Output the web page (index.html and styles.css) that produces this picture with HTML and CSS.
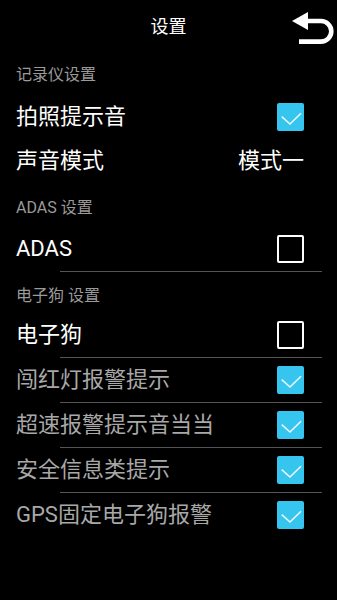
FILE: index.html
```html
<!DOCTYPE html>
<html lang="zh-CN">
<head>
<meta charset="utf-8">
<title>设置</title>
<link rel="stylesheet" href="styles.css">
</head>
<body>
<div class="screen">
  <header class="topbar">
    <span></span>
    <h1 class="title">设置</h1>
    <button class="back" aria-label="返回">
      <svg width="44" height="50" viewBox="0 0 44 50">
        <polygon points="1,20 17,11 17,29" fill="#fff"/>
        <path d="M15 20 H30 A10.3 10.3 0 0 1 30 40.6 H8" fill="none" stroke="#fff" stroke-width="4.6"/>
      </svg>
    </button>
  </header>

  <div class="cat cat-first">记录仪设置</div>
  <div class="row"><span class="label">拍照提示音</span><span class="box on"></span></div>
  <div class="row"><span class="label">声音模式</span><span class="value">模式一</span></div>

  <div class="cat">ADAS 设置</div>
  <div class="row"><span class="label">ADAS</span><span class="box"></span></div>
  <div class="divider"></div>

  <div class="cat cat-tight">电子狗 设置</div>
  <div class="row"><span class="label">电子狗</span><span class="box"></span></div>
  <div class="divider"></div>
  <div class="row off"><span class="label">闯红灯报警提示</span><span class="box on"></span></div>
  <div class="divider"></div>
  <div class="row off"><span class="label">超速报警提示音当当</span><span class="box on"></span></div>
  <div class="divider"></div>
  <div class="row off"><span class="label">安全信息类提示</span><span class="box on"></span></div>
  <div class="divider"></div>
  <div class="row off"><span class="label">GPS固定电子狗报警</span><span class="box on"></span></div>
</div>
</body>
</html>
```

FILE: styles.css
```css
html, body {
  margin: 0;
  padding: 0;
  background: #000;
}
body {
  font-family: Roboto, "Noto Sans CJK SC", sans-serif;
  color: #fff;
  width: 337px;
  height: 600px;
  overflow: hidden;
}
.screen {
  display: flex;
  flex-direction: column;
}
.topbar {
  height: 52px;
  display: grid;
  grid-template-columns: 1fr auto 1fr;
  align-items: center;
}
.title {
  margin: 0;
  padding-top: 2px;
  font-size: 18px;
  font-weight: normal;
  line-height: 24px;
  color: #fff;
}
.back {
  justify-self: end;
  margin: 0;
  padding: 0;
  margin-right: 2px;
  border: 0;
  background: none;
  width: 44px;
  height: 50px;
  display: block;
}
.back svg {
  display: block;
}
.cat {
  font-size: 16px;
  line-height: 20px;
  color: #9a9a9a;
  padding: 15px 16px 9px;
}
.cat-first {
  padding-top: 13px;
  padding-bottom: 10px;
}
.cat-tight {
  padding-top: 14px;
  padding-bottom: 7px;
}
.row {
  height: 44px;
  display: flex;
  align-items: center;
  justify-content: space-between;
  padding: 0 33px 0 16px;
  font-size: 22px;
  color: #fff;
}
.row.off {
  color: #a8a8a8;
}
.label, .value {
  line-height: 28px;
}
.box {
  width: 27px;
  height: 28px;
  box-sizing: border-box;
  border: 2px solid #fff;
  border-radius: 2px;
}
.box.on {
  border: 0;
  background-color: #35c5ef;
  background-image: url("data:image/svg+xml,%3Csvg xmlns='http://www.w3.org/2000/svg' width='27' height='28' viewBox='0 0 27 28'%3E%3Cpath d='M4.7 13.7 L13 21 L24 10.3' fill='none' stroke='%23ffffff' stroke-opacity='0.9' stroke-width='1.6'/%3E%3C/svg%3E");
  background-repeat: no-repeat;
}
.divider {
  height: 1px;
  background: #555;
  margin: 0 15px 0 60px;
}
```
